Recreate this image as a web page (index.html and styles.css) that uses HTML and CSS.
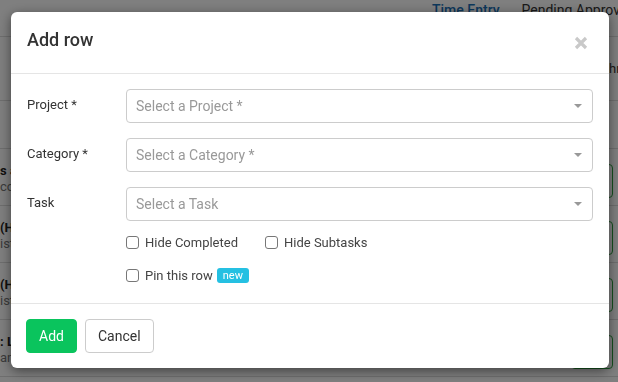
FILE: index.html
```html
<!DOCTYPE html>
<html lang="en">
<head>
    <meta charset="UTF-8">
    <meta name="viewport" content="width=device-width, initial-scale=1.0">
    <title>Time Entry - Add row</title>
    <link rel="stylesheet" href="styles.css">
</head>
<body>
    <!-- Page behind the dialog -->
    <div class="page">
        <div class="topnav">
            <span class="tab active">Time Entry</span>
            <span class="tab">Pending Approvals</span>
        </div>
        <div class="summary">
            <span class="summary-total">hrs</span>
        </div>
        <div class="table-head"></div>
        <div class="entry-row">
            <div class="entry-text">
                <div class="entry-name">s a</div>
                <div class="entry-sub">co</div>
            </div>
            <div class="hours-box"></div>
        </div>
        <div class="entry-row">
            <div class="entry-text">
                <div class="entry-name">(H</div>
                <div class="entry-sub">ist</div>
            </div>
            <div class="hours-box"></div>
        </div>
        <div class="entry-row">
            <div class="entry-text">
                <div class="entry-name">(H</div>
                <div class="entry-sub">ist</div>
            </div>
            <div class="hours-box"></div>
        </div>
        <div class="entry-row">
            <div class="entry-text">
                <div class="entry-name">: L</div>
                <div class="entry-sub">an</div>
            </div>
            <div class="hours-box"></div>
        </div>
    </div>

    <div class="backdrop"></div>

    <!-- Add row dialog -->
    <div class="modal-wrap">
        <div class="modal">
            <div class="modal-header">
                <h4 class="modal-title">Add row</h4>
                <button class="close-btn" type="button" aria-label="Close">
                    <svg width="14" height="14" viewBox="0 0 14 14">
                        <path d="M2 2 L12 12 M12 2 L2 12" stroke="#c9c9c9" stroke-width="3.2" stroke-linecap="butt"/>
                    </svg>
                </button>
            </div>

            <div class="modal-body">
                <div class="form-row">
                    <label class="form-label">Project *</label>
                    <div class="select-box">
                        <span class="placeholder">Select a Project *</span>
                        <span class="caret"></span>
                    </div>
                </div>
                <div class="form-row">
                    <label class="form-label">Category *</label>
                    <div class="select-box">
                        <span class="placeholder">Select a Category *</span>
                        <span class="caret"></span>
                    </div>
                </div>
                <div class="form-row">
                    <label class="form-label">Task</label>
                    <div class="select-box">
                        <span class="placeholder">Select a Task</span>
                        <span class="caret"></span>
                    </div>
                </div>

                <div class="check-row first">
                    <label class="check"><input type="checkbox"> Hide Completed</label>
                    <label class="check"><input type="checkbox"> Hide Subtasks</label>
                </div>
                <div class="check-row">
                    <label class="check pin"><input type="checkbox"> Pin this row</label>
                    <span class="badge">new</span>
                </div>
            </div>

            <div class="modal-footer">
                <button class="btn btn-add" type="button">Add</button>
                <button class="btn btn-cancel" type="button">Cancel</button>
            </div>
        </div>
    </div>
</body>
</html>
```

FILE: styles.css
```css
body {
    font-family: Roboto, "Liberation Sans", Arial, sans-serif;
    margin: 0;
    background-color: #fff;
    color: #333;
    overflow: hidden;
}

/* background page */
.page {
    width: 618px;
}
.topnav {
    height: 36px;
    border-bottom: 1px solid #ddd;
    padding-left: 432px;
    display: flex;
    gap: 22px;
    white-space: nowrap;
    overflow: hidden;
}
.tab {
    font-size: 14px;
    line-height: 20px;
    color: #333;
}
.tab.active {
    color: #1a70b8;
    font-weight: 500;
}
.summary {
    height: 63px;
    border-bottom: 1px solid #ddd;
    padding-left: 609px;
    display: flex;
    align-items: center;
    white-space: nowrap;
    overflow: hidden;
}
.summary-total {
    font-size: 13px;
}
.table-head {
    height: 47px;
    border-bottom: 1px solid #ddd;
}
.entry-row {
    height: 56px;
    border-bottom: 1px solid #ddd;
    display: flex;
    align-items: flex-start;
}
.entry-text {
    flex: 1;
    padding-top: 14px;
    font-size: 13px;
    line-height: 16px;
    white-space: nowrap;
}
.entry-name {
    font-weight: bold;
    color: #222;
}
.entry-sub {
    color: #777;
}
.hours-box {
    width: 40px;
    height: 32px;
    margin: 15px 5px 0 0;
    border: 1px solid #2aa13c;
    border-radius: 4px;
}

.backdrop {
    position: fixed;
    inset: 0;
    background-color: rgba(0,0,0,0.5);
}

/* dialog */
.modal-wrap {
    position: fixed;
    inset: 0;
    padding: 12px 0 0 11px;
}
.modal {
    width: 598px;
    background-color: #fff;
    border-radius: 6px;
    box-shadow: 0 3px 12px rgba(0,0,0,0.5);
}
.modal-header {
    height: 62px;
    box-sizing: border-box;
    padding: 18px 21px 0 16px;
    border-bottom: 1px solid #e5e5e5;
    display: flex;
    justify-content: space-between;
    align-items: flex-start;
}
.modal-title {
    margin: 0;
    font-size: 18px;
    line-height: 20px;
    font-weight: 500;
    color: #333;
}
.close-btn {
    border: none;
    background: none;
    padding: 0;
    margin-top: 6px;
    width: 14px;
    height: 14px;
    cursor: pointer;
}
.close-btn svg {
    display: block;
}

.modal-body {
    padding: 15px 16px 18px 16px;
}
.form-row {
    display: grid;
    grid-template-columns: 99px 1fr;
    margin-bottom: 15px;
}
.form-label {
    font-size: 13px;
    line-height: 18px;
    padding-top: 7px;
    color: #333;
}
.select-box {
    height: 34px;
    box-sizing: border-box;
    border: 1px solid #ccc;
    border-radius: 4px;
    padding: 0 10px 0 9px;
    display: flex;
    align-items: center;
    justify-content: space-between;
}
.placeholder {
    font-size: 14px;
    color: #999;
}
.caret {
    width: 0;
    height: 0;
    border-left: 4px solid transparent;
    border-right: 4px solid transparent;
    border-top: 4px solid #999;
}

.check-row {
    margin-left: 99px;
    height: 20px;
    display: flex;
    align-items: center;
    margin-top: 13px;
}
.check-row.first {
    margin-top: -4px;
}
.check {
    display: flex;
    align-items: center;
    font-size: 13px;
    color: #444;
    margin-right: 27px;
    white-space: nowrap;
}
.check.pin {
    margin-right: 4px;
}
.check input {
    appearance: none;
    width: 13px;
    height: 13px;
    margin: 0 6px 0 0;
    border: 1px solid #777;
    border-radius: 3px;
    background: #fff;
}
.badge {
    height: 15px;
    line-height: 15px;
    padding: 0 6px;
    font-size: 11px;
    color: #fff;
    background-color: #25c0e2;
    border-radius: 3px;
}

.modal-footer {
    border-top: 1px solid #e5e5e5;
    padding: 15px;
    display: flex;
    gap: 8px;
}
.btn {
    height: 34px;
    padding: 0 12px;
    font-family: inherit;
    font-size: 14px;
    border-radius: 4px;
    cursor: pointer;
}
.btn-add {
    background-color: #0ac45d;
    border: 1px solid #0ac45d;
    color: #fff;
}
.btn-cancel {
    background-color: #fff;
    border: 1px solid #ccc;
    color: #333;
}
```
